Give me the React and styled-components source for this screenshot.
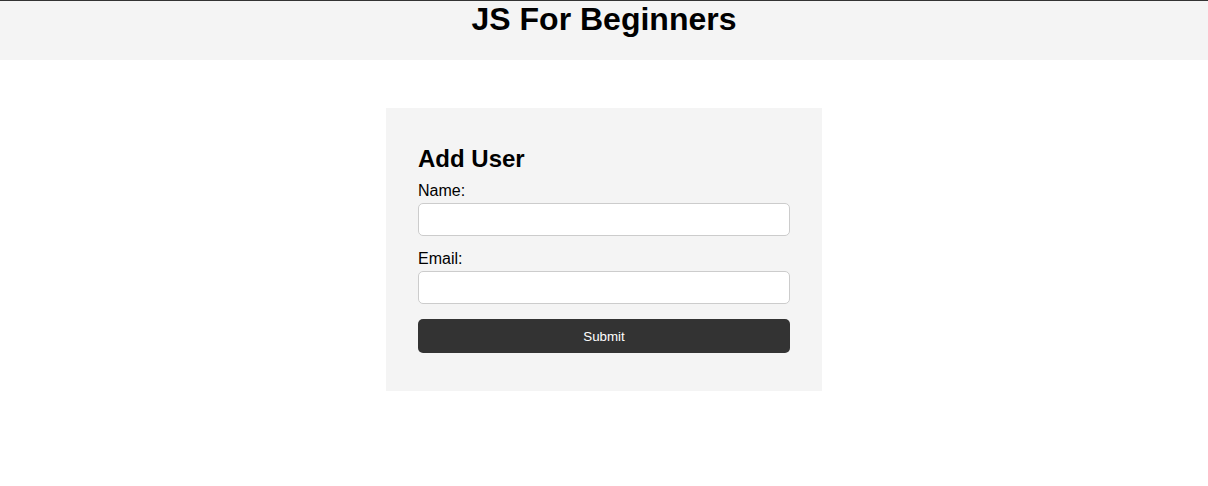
import styled, { createGlobalStyle } from 'styled-components'

const GlobalStyle = createGlobalStyle`
  body {
    margin: 0;
    background: #fff;
    font-family: "Liberation Sans", Arial, sans-serif;
    color: #000;
  }
`

const Header = styled.header`
  height: 59px;
  border-top: 1px solid #333;
  background: #f4f4f4;
  text-align: center;

  h1 {
    margin: 0;
    font-size: 32px;
    line-height: 36px;
    font-weight: 700;
  }
`

const Card = styled.div`
  box-sizing: border-box;
  width: 436px;
  margin: 48px auto 0;
  padding: 37px 32px 38px;
  background: #f4f4f4;
`

const Title = styled.h2`
  margin: 0 0 9px;
  font-size: 24px;
  line-height: 28px;
  font-weight: 700;
`

const Form = styled.form`
  display: flex;
  flex-direction: column;
`

const Field = styled.div`
  margin-bottom: 14px;
`

const Label = styled.label`
  display: block;
  font-size: 16px;
  line-height: 18px;
  margin-bottom: 3px;
`

const Input = styled.input`
  box-sizing: border-box;
  display: block;
  width: 100%;
  height: 33px;
  border: 1px solid #ccc;
  border-radius: 5px;
  background: #fff;
  font-family: inherit;
  font-size: 14px;
  padding: 0 8px;
`

const Button = styled.button`
  box-sizing: border-box;
  width: 100%;
  height: 34px;
  margin-top: 1px;
  border: none;
  border-radius: 5px;
  background: #333;
  color: #fff;
  font-family: "Liberation Sans", Arial, sans-serif;
  font-size: 13.33px;
  cursor: pointer;
`

const App = () => {
  return (
    <>
      <GlobalStyle />
      <Header>
        <h1>JS For Beginners</h1>
      </Header>
      <Card>
        <Title>Add User</Title>
        <Form onSubmit={(e) => e.preventDefault()}>
          <Field>
            <Label htmlFor="name">Name:</Label>
            <Input id="name" type="text" />
          </Field>
          <Field>
            <Label htmlFor="email">Email:</Label>
            <Input id="email" type="text" />
          </Field>
          <Button type="submit">Submit</Button>
        </Form>
      </Card>
    </>
  )
}

export default App
